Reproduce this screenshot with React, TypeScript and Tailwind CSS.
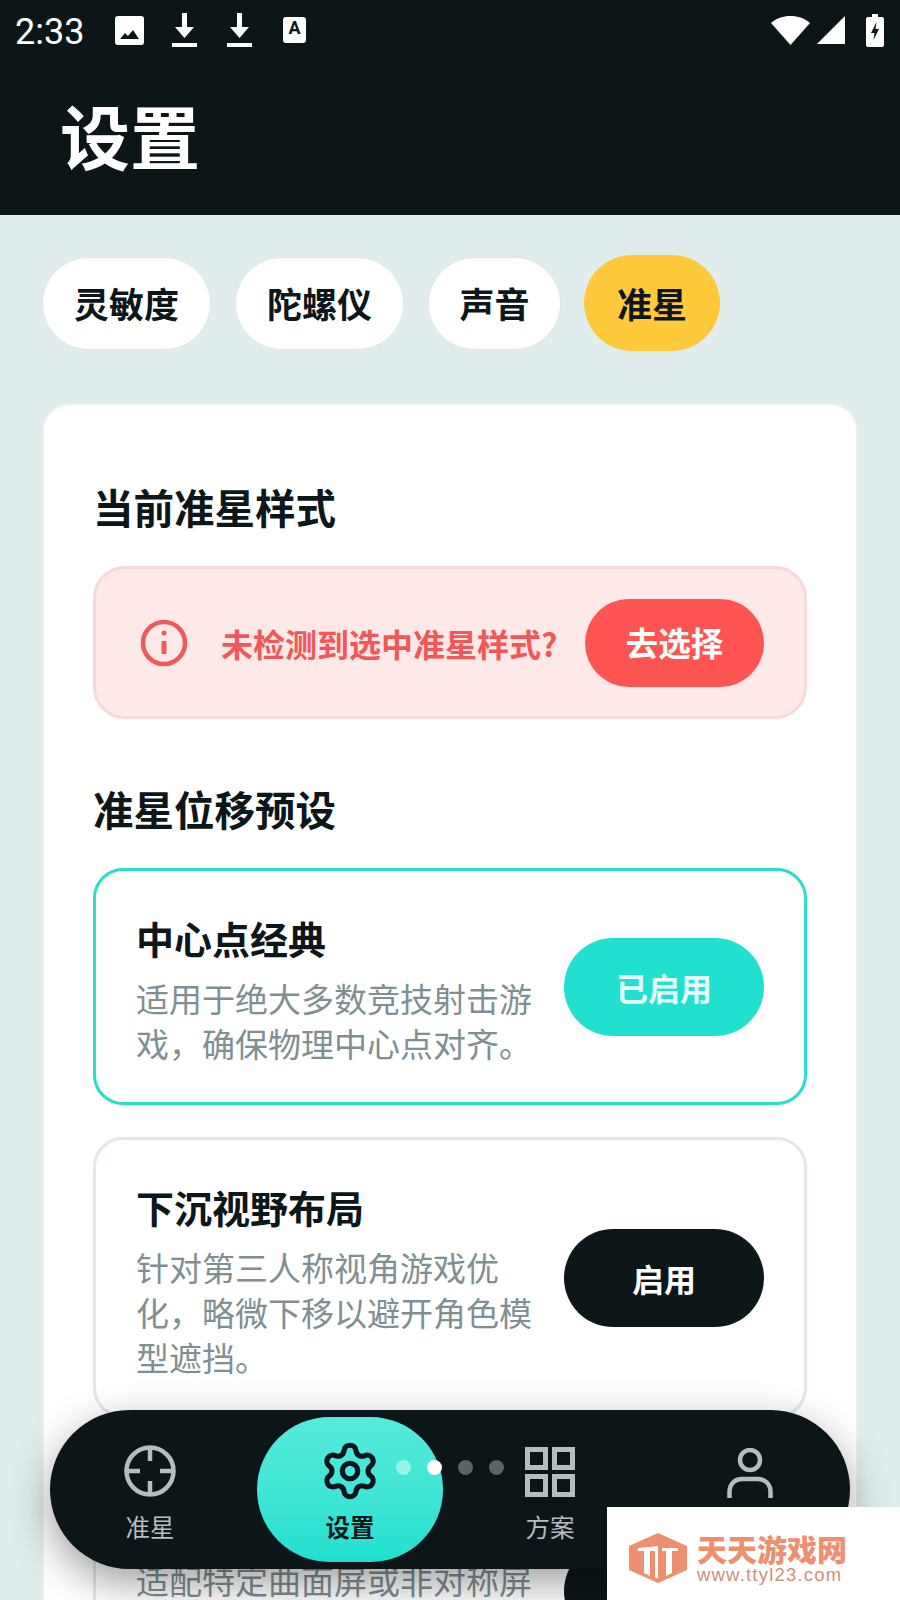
/**
 * Settings page - crosshair tab
 */
import { Settings } from 'lucide-react';

const tabs = [
    { label: '灵敏度', width: 'w-[167px]' },
    { label: '陀螺仪', width: 'w-[167px]' },
    { label: '声音', width: 'w-[131px]' },
];

function StatusBar() {
    return (
        <div className="h-[60px] flex items-center pl-[15px] pr-[16px] text-white">
            <span className="w-[100px] pt-[3px] text-[36px] leading-none font-['Roboto',sans-serif]">2:33</span>
            <svg className="w-[29px] h-[29px]" viewBox="0 0 29 29" fill="white">
                <path fillRule="evenodd" d="M3 0h23a3 3 0 0 1 3 3v23a3 3 0 0 1-3 3H3a3 3 0 0 1-3-3V3a3 3 0 0 1 3-3zM5 23h19l-6-9-5 6-3-3z" />
            </svg>
            <svg className="w-[25px] h-[34px] ml-[28px]" viewBox="0 0 25 34" fill="white">
                <path d="M10 0h5v14h7L12.500 25 3 14h7zM0 30h25v4H0z" />
            </svg>
            <svg className="w-[25px] h-[34px] ml-[30px]" viewBox="0 0 25 34" fill="white">
                <path d="M10 0h5v14h7L12.500 25 3 14h7zM0 30h25v4H0z" />
            </svg>
            <div className="w-[23px] h-[26px] ml-[31px] bg-white rounded-[3px] flex justify-center text-[#0c1619] text-[18px] leading-[22px] font-bold font-['Roboto',sans-serif]">A</div>
            <div className="flex-1" />
            <svg className="w-[39px] h-[29px]" viewBox="0 0 39 29" fill="white">
                <path d="M19.500 29 0 7C5 2.500 12 0 19.500 0S34 2.500 39 7z" />
            </svg>
            <svg className="w-[28px] h-[28px] ml-[7px]" viewBox="0 0 28 28" fill="white">
                <path d="M28 0v28H0z" />
            </svg>
            <svg className="w-[18px] h-[33px] ml-[21px]" viewBox="0 0 18 33" fill="white">
                <path fillRule="evenodd" d="M6 0h6v3h4a2 2 0 0 1 2 2v26a2 2 0 0 1-2 2H2a2 2 0 0 1-2-2V5a2 2 0 0 1 2-2h4zM10.500 8 5 19h3.500l-1 7L13 15H9.500z" />
            </svg>
        </div>
    );
}

function PresetCard({ title, lines, active, height, action, textBox = '' }: { title?: string; lines: string; active?: boolean; height: string; action?: string; textBox?: string }) {
    return (
        <div className={`${height} rounded-[30px] border-[3px] bg-white flex items-center pl-[40px] pr-[40px] ${active ? 'border-[#2bdccd]' : 'border-[#e1e9ea]'}`}>
            <div className="flex-1 mt-[6px]">
                <div className="h-[50px] text-[38px] leading-[50px] font-bold text-[#0d1619]">{title}</div>
                <p className={`mt-[13px] w-[400px] text-[33px] leading-[45px] text-[#808f92] ${textBox}`}>{lines}</p>
            </div>
            <button className={`w-[200px] h-[98px] rounded-[49px] text-[32px] font-bold ${active ? 'bg-[#22e0d0] text-[#e4fbf8]' : 'bg-[#0d1619] text-white'}`}>
                {action}
            </button>
        </div>
    );
}

function BottomNav() {
    return (
        <div className="absolute left-[50px] top-[1410px] w-[800px] h-[159px] rounded-[80px] bg-[#0c1619] shadow-[0_14px_40px_rgba(0,0,0,0.38)] grid grid-cols-4">
            <div className="flex flex-col items-center pt-[35px] text-[#b6bcbf]">
                <svg className="w-[52px] h-[52px]" viewBox="0 0 52 52" fill="none" stroke="currentColor" strokeWidth="4.500">
                    <circle cx="26" cy="26" r="23.500" />
                    <path d="M26 3v13M26 36v13M3 26h13M36 26h13" />
                </svg>
                <span className="mt-[12px] text-[24.500px] leading-[36px]">准星</span>
            </div>
            <div className="flex justify-center pt-[7px]">
                <div className="w-[186px] h-[145px] rounded-[73px] bg-gradient-to-b from-[#56ebda] to-[#20e0d0] flex flex-col items-center pt-[23px] text-[#0c1619]">
                    <Settings size={62} strokeWidth={2} />
                    <span className="mt-[7px] text-[24.500px] leading-[36px] font-bold">设置</span>
                </div>
            </div>
            <div className="flex flex-col items-center pt-[37px] text-[#b6bcbf]">
                <svg className="w-[50px] h-[50px]" viewBox="0 0 50 50" fill="none" stroke="currentColor" strokeWidth="5">
                    <rect x="2.500" y="2.500" width="18" height="18" />
                    <rect x="29.500" y="2.500" width="18" height="18" />
                    <rect x="2.500" y="29.500" width="18" height="18" />
                    <rect x="29.500" y="29.500" width="18" height="18" />
                </svg>
                <span className="mt-[12px] text-[24.500px] leading-[36px]">方案</span>
            </div>
            <div className="flex flex-col items-center pt-[38px] text-[#b6bcbf]">
                <svg className="w-[46px] h-[50px]" viewBox="0 0 46 50" fill="none" stroke="currentColor" strokeWidth="4.500">
                    <circle cx="23" cy="12" r="10" />
                    <path d="M2.500 50V44C2.500 36 8 31 15 31H31C38 31 43.500 36 43.500 44V50" />
                </svg>
            </div>
            <div className="absolute left-[346px] top-[50px] flex gap-[16px]">
                <div className="w-[15px] h-[15px] rounded-full bg-[#9af2e8]" />
                <div className="w-[15px] h-[15px] rounded-full bg-white" />
                <div className="w-[15px] h-[15px] rounded-full bg-[#5b6366]" />
                <div className="w-[15px] h-[15px] rounded-full bg-[#5b6366]" />
            </div>
        </div>
    );
}

function Watermark() {
    return (
        <div className="absolute left-[607px] top-[1507px] w-[293px] h-[93px] bg-white flex items-start pl-[22px] pt-[26px]">
            <svg className="w-[58px] h-[50px]" viewBox="0 0 58 50" fill="#ee8f70">
                <path fillRule="evenodd" d="M29 0 58 13V37L29 50 0 37V13zM9 15V18H15V40L21 43V18H26V44L29 46V13zM33 15V18H37V43L43 40V18H49V15z" />
            </svg>
            <div className="ml-[10px]">
                <div className="text-[30px] leading-[30px] font-black text-[#ee8f70]">天天游戏网</div>
                <div className="mt-[1px] text-[18.500px] leading-[22px] text-[#cf8f7a] font-['Liberation_Sans',sans-serif] tracking-[1.200px]">www.ttyl23.com</div>
            </div>
        </div>
    );
}

export default function App() {
    return (
        <div className="relative w-[900px] h-[1600px] overflow-hidden bg-[#e1eded] font-['Noto_Sans_CJK_SC',sans-serif]">
            <div className="h-[215px] bg-[#0c1619]">
                <StatusBar />
                <h1 className="pl-[60px] mt-[39px] text-[70px] leading-[72px] font-bold text-white">设置</h1>
            </div>

            <div className="px-[43px] pt-[40px]">
                <div className="flex items-center gap-[26px]">
                    {tabs.map(tab => (
                        <div key={tab.label} className={`${tab.width} h-[91px] rounded-[46px] bg-white flex items-center justify-center text-[35px] font-bold text-[#0d1619] shadow-[0_0_2px_rgba(0,40,40,0.06)]`}>
                            {tab.label}
                        </div>
                    ))}
                    <div className="w-[136px] h-[96px] -ml-[2px] rounded-[48px] bg-[#ffc93c] flex items-center justify-center text-[35px] font-bold text-[#0d1619]">准星</div>
                </div>

                <div className="mt-[52px] h-[1300px] rounded-[28px] bg-white border-[2px] border-[#eaf1f1] -mx-[1px] px-[49px] pt-[72px]">
                    <h2 className="text-[40.500px] leading-[60px] font-bold text-[#0d1619]">当前准星样式</h2>
                    <div className="mt-[29px] h-[153px] rounded-[32px] bg-[#fee8e8] border-[3px] border-[#f8d8d9] flex items-center pl-[44px] pr-[40px]">
                        <svg className="w-[48px] h-[48px] shrink-0" viewBox="0 0 48 48" fill="none" stroke="#ef5a5a" strokeWidth="4.500">
                            <circle cx="24" cy="24" r="21" />
                            <path d="M24 22v13" strokeWidth="5" />
                            <circle cx="24" cy="14" r="2.500" fill="#ef5a5a" stroke="none" />
                        </svg>
                        <span className="ml-[33px] flex-1 whitespace-nowrap text-[32px] font-bold text-[#f25757]">未检测到选中准星样式?</span>
                        <button className="w-[179px] h-[88px] rounded-[44px] bg-[#ff5552] text-white text-[32.500px] font-bold">去选择</button>
                    </div>

                    <h2 className="mt-[60px] text-[40.500px] leading-[60px] font-bold text-[#0d1619]">准星位移预设</h2>
                    <div className="mt-[29px] flex flex-col gap-[32px]">
                        <PresetCard active height="h-[237px]" title="中心点经典" action="已启用" lines="适用于绝大多数竞技射击游戏，确保物理中心点对齐。" />
                        <PresetCard height="h-[281px]" title="下沉视野布局" action="启用" lines="针对第三人称视角游戏优化，略微下移以避开角色模型遮挡。" />
                        <PresetCard height="h-[281px]" lines="适配特定曲面屏或非对称屏" textBox="h-[135px]" />
                    </div>
                </div>
            </div>

            <BottomNav />
            <Watermark />
        </div>
    );
}
